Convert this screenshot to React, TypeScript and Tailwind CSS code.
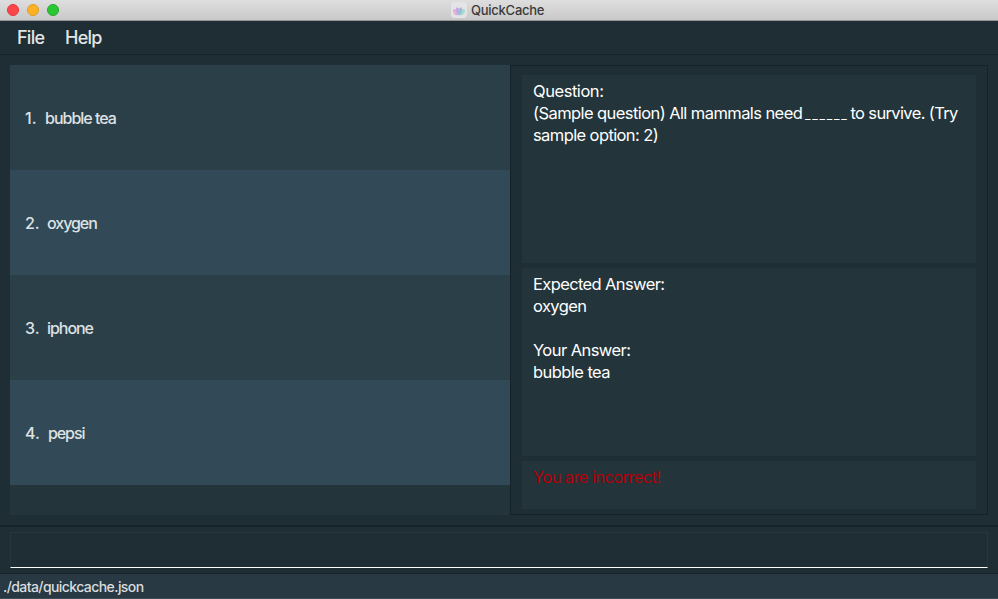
import React from "react";

const choices = [
  { index: "1.", label: "bubble tea", gap: "w-[20px]", tracking: "tracking-[-1px]" },
  { index: "2.", label: "oxygen", gap: "w-[22px]", tracking: "tracking-[-1.05px]" },
  { index: "3.", label: "iphone", gap: "w-[22px]", tracking: "tracking-[-1.05px]" },
  { index: "4.", label: "pepsi", gap: "w-[23px]", tracking: "tracking-[-1.1px]" },
];

function AppIcon() {
  return (
    <svg width="16" height="16" viewBox="0 0 16 16" className="shrink-0">
      <rect x="0" y="0" width="16" height="16" rx="4" fill="#e4e4e6" />
      <path d="M2 8.2 Q2 7 3.5 7 H7 V13.2 H5 C3 12.5 2 10.5 2 8.2Z" fill="#dfb0d8" />
      <path d="M14 8.2 Q14 7 12.5 7 H9 L8 13.2 H10.5 C13 12.5 14 10.5 14 8.2Z" fill="#a5dccf" />
      <path d="M5 6 L6 5.2 L7.5 6.5 H8.5 L10 5.2 L11 6 V9 L8 13.2 L5.5 10.5Z" fill="#bcaae2" />
      <path d="M8 8.5 L10.5 8 L10 12 L8 13.2 L7 12Z" fill="#94c3dc" />
    </svg>
  );
}

function TitleBar() {
  return (
    <header className="flex h-[21px] shrink-0 items-center border-b border-[#969696] bg-linear-to-b from-[#dedede] to-[#c9c9c9]">
      <div className="flex gap-2 pl-[7px]">
        <span className="size-3 rounded-full border border-[#e2383a] bg-[#fc4649]" />
        <span className="size-3 rounded-full border border-[#e09b24] bg-[#fdb225]" />
        <span className="size-3 rounded-full border border-[#1fa92a] bg-[#29c732]" />
      </div>
      <div className="ml-[392px] flex items-center gap-1">
        <AppIcon />
        <span className="text-[13px] leading-5 font-[450] tracking-[-0.25px] text-[#3a3a3a]">QuickCache</span>
      </div>
    </header>
  );
}

export default function App() {
  return (
    <div className="flex h-[599px] w-[998px] flex-col overflow-hidden bg-[#1f2d34] font-['Inter',sans-serif] font-[450] whitespace-nowrap">
      <TitleBar />
      <nav className="flex h-[34px] shrink-0 items-center border-b border-[#16232a] pl-[17px] text-[18px] leading-6 text-[#e2e5e6]">
        <span className="w-12 tracking-[-0.75px]">File</span>
        <span className="tracking-[-0.75px]">Help</span>
      </nav>
      <main className="flex h-[470px] shrink-0 px-[10px] py-[10px]">
        <ol className="h-[450px] w-[500px] bg-[#23343b]">
          {choices.map((c) => (
            <li
              key={c.index}
              className="flex h-[105px] items-center bg-[#2b3f49] pl-[15px] text-[16px] leading-6 text-[#dee2e4] even:bg-[#324a57]"
            >
              <span className={c.gap}>{c.index}</span>
              <span className={c.tracking}>{c.label}</span>
            </li>
          ))}
        </ol>
        <section className="flex h-[450px] w-[478px] flex-col gap-[5px] border border-[#15222a] pt-[9px] pl-[11px] text-[16.5px] leading-[22px] font-[425] text-white">
          <div className="h-[188px] w-[454px] bg-[#23343b] pt-[5px] pl-[11px]">
            <p className="tracking-[-0.45px]">Question:</p>
            <p className="flex h-[22px]">
              <span className="w-[272px] tracking-[-0.58px]">(Sample question) All mammals need</span>
              <span className="w-[45.5px] pt-[2px] text-[12px] tracking-[1.8px]">______</span>
              <span className="tracking-[-0.64px]">to survive. (Try</span>
            </p>
            <p className="tracking-[-0.6px]">sample option: 2)</p>
          </div>
          <div className="h-[188px] w-[454px] bg-[#23343b] pt-[5px] pl-[11px]">
            <p className="tracking-[-0.62px]">Expected Answer:</p>
            <p className="tracking-[-0.6px]">oxygen</p>
            <p className="mt-[22px] tracking-[-0.56px]">Your Answer:</p>
            <p className="tracking-[-0.56px]">bubble tea</p>
          </div>
          <div className="h-[48px] w-[454px] bg-[#23343b] pt-[5px] pl-[11px] text-[#b20008]">
            <p className="tracking-[-0.6px]">You are incorrect!</p>
          </div>
        </section>
      </main>
      <div className="h-[49px] shrink-0 border-y border-t-2 border-[#16232a] px-[10px] pt-[5px]">
        <div className="h-[36px] border border-b-white border-[#25363e]" />
      </div>
      <footer className="h-[25px] shrink-0 border-b border-[#3d4d56] bg-[#283943] pl-[3px] text-[14px] leading-[26px] tracking-[-0.58px] text-[#dadddf]">
        ./data/quickcache.json
      </footer>
    </div>
  );
}
